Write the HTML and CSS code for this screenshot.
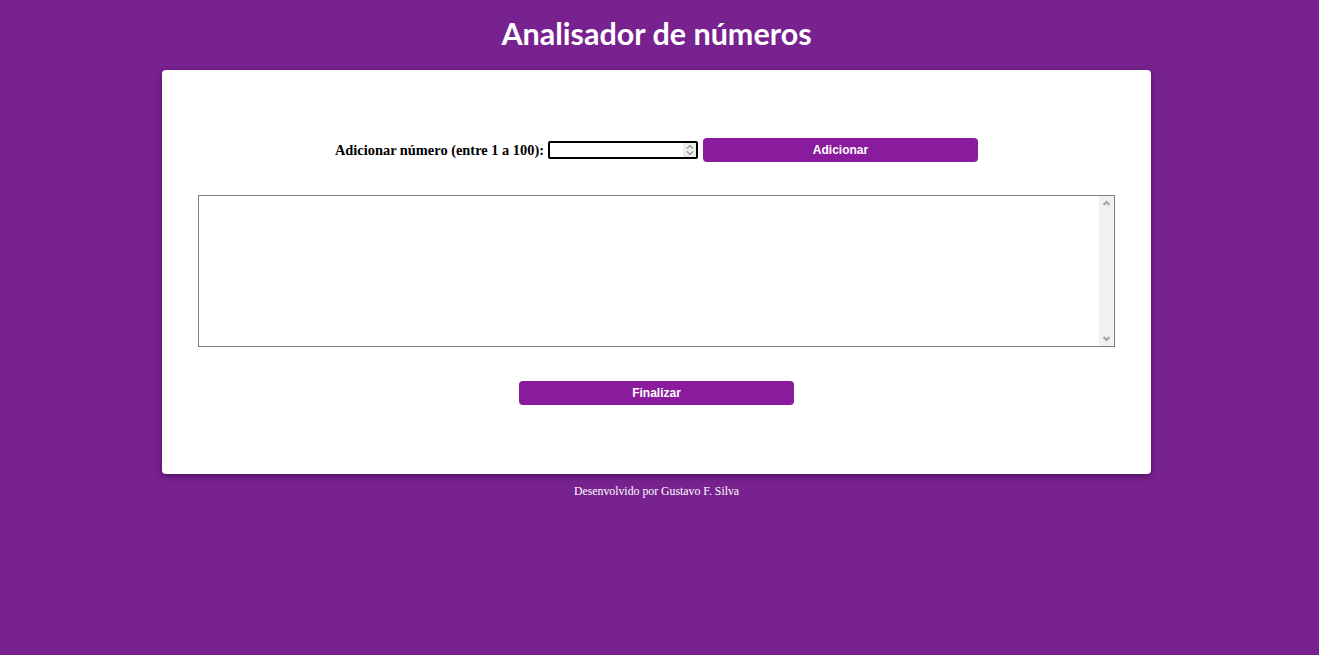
FILE: index.html
```html
<!DOCTYPE html>
<html lang="pt-BR">
<head>
<meta charset="utf-8">
<title>Analisador de números</title>
<link rel="stylesheet" href="styles.css">
</head>
<body>
<header class="topo">
  <h1 class="titulo">Analisador de números</h1>
</header>
<main class="cartao">
  <div class="linha-entrada">
    <label class="rotulo" for="num">Adicionar número (entre 1 a 100):</label>
    <div class="campo">
      <input class="campo-input" type="text" id="num">
      <span class="spin">
        <svg width="10" height="16" viewBox="0 0 10 16"><path d="M1.5 6.5 L5 3 L8.5 6.5" fill="none" stroke="#8a8a8a" stroke-width="1.3"/><path d="M1.5 9.5 L5 13 L8.5 9.5" fill="none" stroke="#8a8a8a" stroke-width="1.3"/></svg>
      </span>
    </div>
    <button class="botao" type="button">Adicionar</button>
  </div>
  <div class="lista">
    <div class="lista-conteudo"></div>
    <div class="barra">
      <svg class="seta" width="15" height="15" viewBox="0 0 15 15"><path d="M4.5 9 L7.5 6 L10.5 9" fill="none" stroke="#a3a3a3" stroke-width="2"/></svg>
      <svg class="seta" width="15" height="15" viewBox="0 0 15 15"><path d="M4.5 6 L7.5 9 L10.5 6" fill="none" stroke="#a3a3a3" stroke-width="2"/></svg>
    </div>
  </div>
  <div class="linha-final">
    <button class="botao" type="button">Finalizar</button>
  </div>
</main>
<footer class="rodape">Desenvolvido por Gustavo F. Silva</footer>
</body>
</html>
```
FILE: styles.css
```css
html {
  margin: 0;
  padding: 0;
  background: #78228f;
}
body {
  margin: 0;
  padding: 0;
  width: 1313px;
  background: #78228f;
  font-family: "Liberation Serif", "Times New Roman", serif;
  min-height: 655px;
}
.topo {
  padding-top: 15px;
  height: 56px;
  box-sizing: border-box;
}
.titulo {
  margin: 0;
  text-align: center;
  color: #ffffff;
  font-family: Lato, "Open Sans", sans-serif;
  font-weight: 700;
  font-size: 30.5px;
  line-height: 36px;
}
.cartao {
  width: 989px;
  margin: 14px auto 0;
  background: #ffffff;
  border-radius: 4px;
  box-shadow: 0 2px 6px rgba(40, 0, 50, 0.55);
  padding: 68px 36px 69px;
  box-sizing: border-box;
  height: 404px;
}
.linha-entrada {
  display: flex;
  justify-content: center;
  align-items: center;
  height: 24px;
}
.rotulo {
  font-weight: 700;
  font-size: 14.4px;
  color: #000;
  margin-right: 4px;
}
.campo {
  display: flex;
  align-items: center;
  width: 150px;
  height: 18px;
  border: 2px solid #000;
  box-sizing: border-box;
  border-radius: 2px;
  margin-right: 5px;
}
.campo-input {
  flex: 1;
  min-width: 0;
  border: none;
  outline: none;
  padding: 0 2px;
  height: 14px;
  font-size: 12px;
  background: transparent;
}
.spin {
  display: flex;
  width: 13px;
  height: 14px;
  align-items: center;
  justify-content: center;
  background: #ececec;
  margin-right: 0;
}
.spin svg {
  width: 10px;
  height: 14px;
}
.botao {
  width: 275px;
  height: 24px;
  border: none;
  border-radius: 4px;
  background: #8a1b9c;
  color: #ffffff;
  font-family: "Liberation Sans", Arial, sans-serif;
  font-weight: 700;
  font-size: 12px;
  padding: 0;
  cursor: pointer;
}
.lista {
  display: flex;
  margin-top: 33px;
  height: 152px;
  border: 1px solid #808080;
  box-sizing: border-box;
}
.lista-conteudo {
  flex: 1;
}
.barra {
  width: 15px;
  background: #f1f1f1;
  display: flex;
  flex-direction: column;
  justify-content: space-between;
}
.seta {
  display: block;
}
.linha-final {
  display: flex;
  justify-content: center;
  margin-top: 34px;
}
.rodape {
  text-align: center;
  color: #ffffff;
  font-size: 11.8px;
  margin-top: 10px;
}
```
